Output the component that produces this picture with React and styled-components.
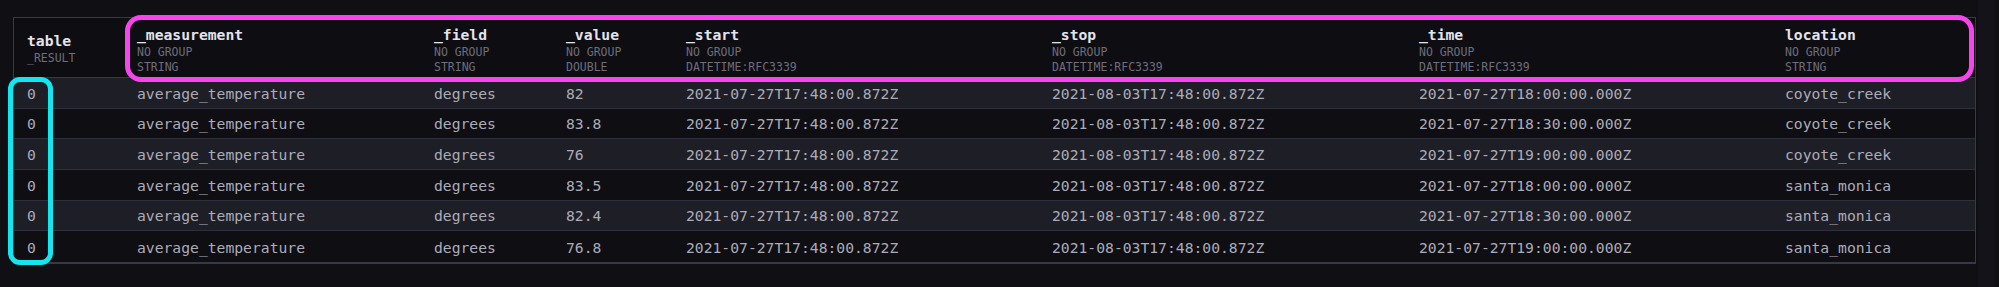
import React from "react";
import styled, { createGlobalStyle } from "styled-components";

const GlobalStyle = createGlobalStyle`
  html, body {
    margin: 0;
    padding: 0;
    background: #0f0f14;
  }
  body {
    font-family: "DejaVu Sans Mono", "Liberation Mono", monospace;
  }
`;

const Page = styled.div`
  display: flex;
  width: 1999px;
  height: 287px;
  background: #0f0f14;
  box-sizing: border-box;
`;

const Main = styled.div`
  flex: 1;
  padding: 17px 0 0 13px;
`;

const Scrollbar = styled.div`
  width: 17px;
  margin-right: 4px;
  background: #131319;
`;

const TableWrap = styled.div`
  position: relative;
  width: 1963px;
`;

const Grid = styled.div`
  display: grid;
  grid-template-columns: 110px 297px 132px 120px 366px 367px 366px 203px;
  border: 1px solid #383846;
  border-right-width: 2px;
  border-bottom-width: 2px;
  background: #0e0e13;
`;

const HeadCell = styled.div`
  display: flex;
  flex-direction: column;
  justify-content: ${(p) => (p.$center ? "center" : "flex-start")};
  padding: ${(p) => (p.$center ? "2px 13px 0" : "7px 13px 2px")};
  border-bottom: 1px solid #383846;
  background: #0d0d12;
  height: 60px;
  box-sizing: border-box;
`;

const Title = styled.div`
  color: #e4e4ec;
  font-weight: bold;
  font-size: 14.7px;
  line-height: 20px;
  white-space: nowrap;
`;

const Sub = styled.div`
  color: #6e6e7c;
  font-size: 11.5px;
  line-height: 15px;
  white-space: nowrap;
`;

const Cell = styled.div`
  display: flex;
  align-items: center;
  height: 30.67px;
  box-sizing: border-box;
  padding: 1px 13px 0;
  color: #acacb8;
  font-size: 14.7px;
  white-space: nowrap;
  background: ${(p) => (p.$odd ? "#1e1e26" : "#0e0e13")};
  border-bottom: ${(p) => (p.$last ? "none" : "1px solid #30303c")};
`;

const Highlight = styled.div`
  position: absolute;
  left: ${(p) => p.$x}px;
  top: ${(p) => p.$y}px;
  width: ${(p) => p.$w}px;
  height: ${(p) => p.$h}px;
  border: 5px solid ${(p) => p.$color};
  border-radius: ${(p) => p.$r}px;
  box-sizing: border-box;
  pointer-events: none;
`;

const columns = [
  { name: "table", group: "_RESULT" },
  { name: "_measurement", group: "NO GROUP", type: "STRING" },
  { name: "_field", group: "NO GROUP", type: "STRING" },
  { name: "_value", group: "NO GROUP", type: "DOUBLE" },
  { name: "_start", group: "NO GROUP", type: "DATETIME:RFC3339" },
  { name: "_stop", group: "NO GROUP", type: "DATETIME:RFC3339" },
  { name: "_time", group: "NO GROUP", type: "DATETIME:RFC3339" },
  { name: "location", group: "NO GROUP", type: "STRING" },
];

const start = "2021-07-27T17:48:00.872Z";
const stop = "2021-08-03T17:48:00.872Z";

const rows = [
  ["0", "average_temperature", "degrees", "82", start, stop, "2021-07-27T18:00:00.000Z", "coyote_creek"],
  ["0", "average_temperature", "degrees", "83.8", start, stop, "2021-07-27T18:30:00.000Z", "coyote_creek"],
  ["0", "average_temperature", "degrees", "76", start, stop, "2021-07-27T19:00:00.000Z", "coyote_creek"],
  ["0", "average_temperature", "degrees", "83.5", start, stop, "2021-07-27T18:00:00.000Z", "santa_monica"],
  ["0", "average_temperature", "degrees", "82.4", start, stop, "2021-07-27T18:30:00.000Z", "santa_monica"],
  ["0", "average_temperature", "degrees", "76.8", start, stop, "2021-07-27T19:00:00.000Z", "santa_monica"],
];

const App = () => {
  return (
    <Page>
      <GlobalStyle />
      <Main>
        <TableWrap>
          <Grid>
            {columns.map((c, i) => (
              <HeadCell key={c.name} $center={i === 0}>
                <Title>{c.name}</Title>
                <Sub>{c.group}</Sub>
                {c.type && <Sub>{c.type}</Sub>}
              </HeadCell>
            ))}
            {rows.map((r, ri) =>
              r.map((v, ci) => (
                <Cell
                  key={ri + "-" + ci}
                  $odd={ri % 2 === 0}
                  $last={ri === rows.length - 1}
                >
                  {v}
                </Cell>
              ))
            )}
          </Grid>
          <Highlight $x={112} $y={-2} $w={1849} $h={67} $r={16} $color="#f844ec" />
          <Highlight $x={-5} $y={60} $w={45} $h={188} $r={12} $color="#14e6f0" />
        </TableWrap>
      </Main>
      <Scrollbar />
    </Page>
  );
};

export default App;
